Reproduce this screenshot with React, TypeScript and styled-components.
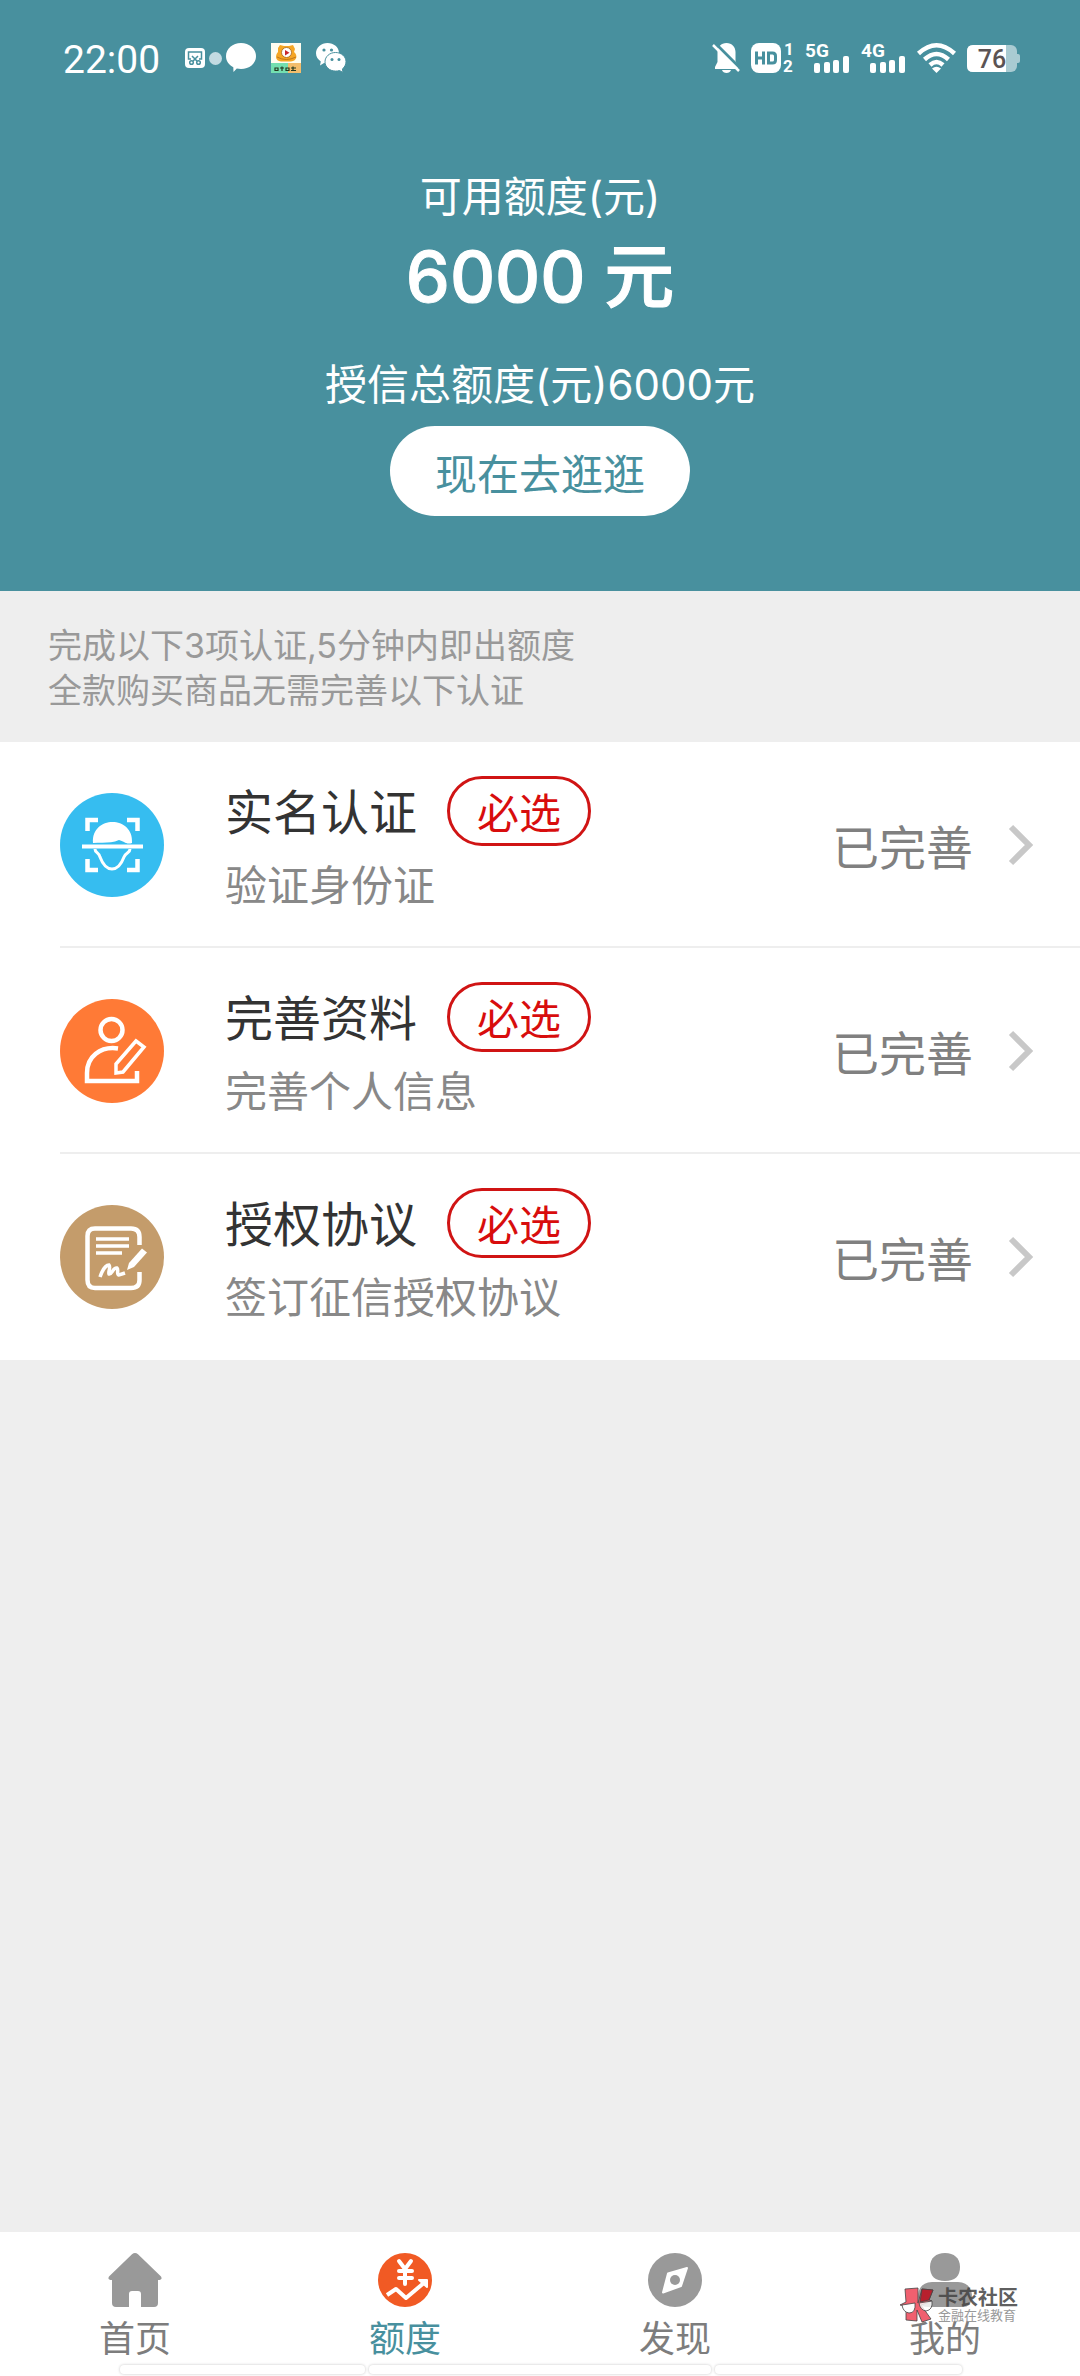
import React from 'react';
import styled, { createGlobalStyle } from 'styled-components';

const teal = '#48909e';
const textFont = 'Inter, "Noto Sans CJK SC", sans-serif';

const GlobalStyle = createGlobalStyle`
  *, *::before, *::after { box-sizing: border-box; }
  body { margin: 0; background: #eeeeee; font-family: ${textFont}; }
  a { color: inherit; text-decoration: none; }
  svg { display: block; flex: none; overflow: visible; }
`;

const Page = styled.div`
  min-height: 100vh;
  display: flex;
  flex-direction: column;
  background: #eeeeee;
`;

const Header = styled.header`
  background: ${teal};
  color: #ffffff;
  padding-bottom: 75px;
`;

const StatusBar = styled.div`
  display: flex;
  align-items: center;
  justify-content: space-between;
  height: 116px;
  padding: 0 60px 0 63px;
`;

const StatusGroup = styled.div<{ $gap: number }>`
  display: flex;
  align-items: center;
  gap: ${(p) => p.$gap}px;
`;

const Clock = styled.time`
  padding-top: 4px;
  margin-right: 10px;
  font: 400 39px/48px Roboto, sans-serif;
`;

const Credit = styled.section`
  display: flex;
  flex-direction: column;
  align-items: center;
  padding-top: 51px;
`;

const CreditLabel = styled.h1`
  margin: 0;
  font-size: 42px;
  line-height: 60px;
  font-weight: 400;
`;

const CreditAmount = styled.p`
  margin: 0 0 28px;
  font-size: 70px;
  line-height: 100px;
  font-weight: 500;
  -webkit-text-stroke: 1px #ffffff;
`;

const CreditTotal = styled.p`
  margin: 0;
  font-size: 42px;
  line-height: 60px;
`;

const ShopButton = styled.button`
  margin-top: 11px;
  width: 300px;
  height: 90px;
  padding: 7px 0 0;
  border: 0;
  border-radius: 45px;
  background: #ffffff;
  color: ${teal};
  font-family: inherit;
  font-size: 42px;
  line-height: 60px;
`;

const Notice = styled.p`
  margin: 0;
  padding: 32px 48px 29px;
  color: #999999;
  font-size: 34px;
  line-height: 45px;
`;

const NoticeLine = styled.span`
  display: block;
`;

const List = styled.ul`
  margin: 0;
  padding: 0 0 0 60px;
  list-style: none;
  background: #ffffff;
`;

const Item = styled.li`
  border-bottom: 2px solid #eeeeee;

  &:last-child { border-color: transparent; }
`;

const ItemLink = styled.a`
  display: flex;
  align-items: center;
  min-height: 204px;
  padding: 2px 47px 0 0;
`;

const ItemBody = styled.div`
  flex: 1;
  min-width: 0;
  margin-left: 61px;
`;

const ItemHead = styled.div`
  display: flex;
  align-items: center;
  gap: 30px;
`;

const ItemTitle = styled.h2`
  margin: 0;
  padding-top: 4px;
  color: #333333;
  font-size: 48px;
  line-height: 66px;
  font-weight: 400;
`;

const Required = styled.span`
  width: 144px;
  height: 70px;
  padding-top: 5px;
  border: 3px solid #d01414;
  border-radius: 35px;
  color: #d80d0d;
  font-size: 42px;
  line-height: 59px;
  text-align: center;
`;

const ItemNote = styled.p`
  margin: 12px 0 0;
  color: #888888;
  font-size: 42px;
  line-height: 56px;
`;

const ItemState = styled.span`
  margin-right: 36px;
  padding-top: 6px;
  color: #808080;
  font-size: 47px;
  line-height: 68px;
`;

const TabBar = styled.nav`
  position: sticky;
  bottom: 0;
  display: grid;
  grid-template-columns: repeat(4, 1fr);
  height: 144px;
  margin-top: auto;
  background: #ffffff;
`;

const Tab = styled.a<{ $active?: boolean }>`
  display: flex;
  flex-direction: column;
  align-items: center;
  gap: 6px;
  padding-top: 21px;
  color: ${(p) => (p.$active ? teal : '#7d7d7d')};
  font-size: 36px;
  line-height: 52px;
`;

const Strips = styled.div`
  position: absolute;
  left: 120px;
  right: 118px;
  bottom: 2px;
  display: grid;
  grid-template-columns: 246fr 342fr 248fr;
  gap: 4px;
`;

const Strip = styled.div`
  height: 9px;
  border-radius: 4px;
  background: #ffffff;
  box-shadow: 0 0 3px #c4c4c4;
`;

const Watermark = styled.div`
  position: absolute;
  right: 62px;
  top: 56px;
  display: flex;
  gap: 4px;
  align-items: center;
`;

const WatermarkName = styled.strong`
  display: block;
  color: #444444;
  opacity: 0.85;
  font-size: 20px;
  line-height: 20px;
`;

const WatermarkSlogan = styled.small`
  display: block;
  color: #999999;
  font-size: 13px;
  line-height: 14px;
`;

const ClipIcon = () => (
  <svg width="20" height="20" viewBox="0 0 20 20" fill="none" stroke={teal} strokeWidth="1.5">
    <rect width="20" height="20" rx="4" fill="#fff" stroke="none" />
    <path d="M6 11H3.500V4H16.500V11H14M7 8L12 13M13 8L8 13" />
    <circle cx="6.500" cy="14.500" r="1.800" />
    <circle cx="13.500" cy="14.500" r="1.800" />
  </svg>
);

const DotIcon = () => (
  <svg width="13" height="13" viewBox="0 0 13 13">
    <circle cx="6.500" cy="6.500" r="6.500" fill="#c3dbe2" />
  </svg>
);

const BubbleIcon = () => (
  <svg width="30" height="30" viewBox="0 0 30 30" fill="#fff">
    <path d="M15 0C23.300 0 30 5.800 30 13.200S23.300 26 15 26C13.600 26 12 25.800 10.800 25.500L7.500 29L7.300 24.200C3 22 0 17.900 0 13.200C0 5.800 6.700 0 15 0Z" />
  </svg>
);

const CartoonIcon = () => (
  <svg width="30" height="30" viewBox="0 0 30 30">
    <rect width="30" height="30" fill="#fffdf0" />
    <rect y="20" width="20" height="10" fill="#73dfb0" />
    <rect x="17" y="20" width="13" height="10" fill="#f3bd6c" />
    <path d="M7 5L9 2L13 3H18L22 2L24 6L23 9C27 12 26 18 20 18.500H10C4 18 4 12 7 9Z" fill="#f5a623" />
    <circle cx="15.500" cy="9.500" r="5" fill="#fff" stroke="#a5641c" strokeWidth="0.800" />
    <path d="M14 7V12.500L18.500 9.700Z" fill="#c8262e" />
    <path d="M6 14Q15 19 25 14" fill="none" stroke="#b06a1a" strokeWidth="0.800" />
    <path d="M4 25h3v2.500h-3zM9 25h4M11 23.500v4.500M15 25h3v2.500h-3zM20 25h5M22 23.500v4.500M20 27.500h5" fill="none" stroke="#25391f" strokeWidth="1.200" />
  </svg>
);

const WechatIcon = () => (
  <svg width="30" height="30" viewBox="0 0 30 30">
    <path d="M11.500 0C17.800 0 23 4.300 23 10S17.800 20.500 11.500 20.500L8 20L4 22.500L4.800 18.500C2 16.600 0 13.800 0 10.300C0 4.500 5.200 0 11.500 0Z" fill="#fff" />
    <path d="M19.500 9.500C25.500 9.500 30 13.600 30 18.700C30 21.700 28.500 24.200 26.400 25.900L27 29.500L23.500 27.500C22.300 27.900 21 28.100 19.500 28.100C13.700 28.100 9 24 9 18.800S13.700 9.500 19.500 9.500Z" fill="#fff" stroke={teal} strokeWidth="1" />
    <g fill={teal}>
      <circle cx="8" cy="7" r="1.600" />
      <circle cx="15.500" cy="7" r="1.600" />
      <circle cx="16" cy="16.500" r="1.500" />
      <circle cx="23" cy="16.500" r="1.500" />
    </g>
  </svg>
);

const MutedIcon = () => (
  <svg width="27" height="30" viewBox="0 0 27 30">
    <path d="M13.500 0C19 0 22.500 4 22.500 9V18L25 24V26H2V24L4.500 19V9C4.500 4 8 0 13.500 0Z" fill="#fff" />
    <path d="M9 27H18C17 31 10 31 9 27Z" fill="#fff" />
    <path d="M1 -1L28 26" stroke={teal} strokeWidth="3" />
    <path d="M0 2L26 28" stroke="#fff" strokeWidth="2.500" />
  </svg>
);

const HdIcon = () => (
  <svg width="43" height="30" viewBox="0 0 43 30">
    <rect width="30" height="30" rx="8" fill="#fff" />
    <path d="M5.500 8.500V21.500M12.500 8.500V21.500M5.500 15H12.500M17.500 10H21.500Q24.500 10 24.500 13V17Q24.500 20 21.500 20H17.500Z" fill="none" stroke={teal} strokeWidth="3" />
    <g fill="#fff" fontFamily="Roboto, sans-serif" fontWeight="700" fontSize="17">
      <text x="33" y="12">1</text>
      <text x="32" y="29">2</text>
    </g>
  </svg>
);

const SignalIcon = ({ label }: { label: string }) => (
  <svg width="45" height="30" viewBox="0 0 45 30" fill="#fff">
    <text x="0" y="14" fontFamily="Roboto, sans-serif" fontWeight="700" fontSize="19">{label}</text>
    <rect x="9" y="20" width="6" height="10" rx="2" />
    <rect x="19" y="19" width="6" height="11" rx="2" />
    <rect x="28" y="17" width="6" height="13" rx="2" />
    <rect x="38" y="13" width="6" height="17" rx="2" />
  </svg>
);

const WifiIcon = () => (
  <svg width="39" height="30" viewBox="0 0 39 30" fill="none" stroke="#fff" strokeWidth="4.500">
    <path d="M1.500 10.500Q19.500 -6 37.500 10.500M7.500 16.500Q19.500 5.500 31.500 16.500M13 22Q19.500 16 26 22" />
    <path d="M15 25.500Q19.500 22 24 25.500L19.500 30Z" fill="#fff" stroke="none" />
  </svg>
);

const BatteryIcon = () => (
  <svg width="53" height="27" viewBox="0 0 53 27">
    <rect width="50" height="27" rx="6" fill="#a9cbd2" />
    <path d="M50 9H51Q53 9 53 11V16Q53 18 51 18H50Z" fill="#a9cbd2" />
    <path d="M6 0H39V27H6Q0 27 0 21V6Q0 0 6 0Z" fill="#fff" />
    <text x="25" y="23" textAnchor="middle" fill="#5b5354" fontFamily="Roboto, sans-serif" fontWeight="500" fontSize="25">76</text>
  </svg>
);

const FaceIcon = () => (
  <svg width="104" height="104" viewBox="0 0 104 104" fill="none" stroke="#fff">
    <circle cx="52" cy="52" r="52" fill="#36bdf0" stroke="none" />
    <path d="M27.500 38V27H38M67 27H77.500V38M77.500 66V77H67M38 77H27.500V66" strokeWidth="4.500" />
    <path d="M33 50C31 22 74 22 72 50C66 52 64 48 59 47C51 51 43 49 33 50Z" fill="#fff" stroke="none" />
    <path d="M22 53.500H83" strokeWidth="4" />
    <path d="M35 56C35 60 39 59 40 64C43 72 47 76 52 76S61 72 64 64C66 59 70 60 70 56" strokeWidth="3" />
  </svg>
);

const ProfileIcon = () => (
  <svg width="104" height="104" viewBox="0 0 104 104" fill="none" stroke="#fff" strokeWidth="4.500">
    <circle cx="52" cy="52" r="52" fill="#ff7a36" stroke="none" />
    <circle cx="51.500" cy="31" r="11" />
    <path d="M58 49.500C40 47 27 58 27 74V82H77V72" />
    <path d="M76 42L84 48L63 73L56 74V65Z" strokeWidth="3.500" />
  </svg>
);

const AgreementIcon = () => (
  <svg width="104" height="104" viewBox="0 0 104 104" fill="none" stroke="#fff" strokeWidth="4.500">
    <circle cx="52" cy="52" r="52" fill="#c49c6b" stroke="none" />
    <path d="M79.500 40V32Q79.500 23.500 71 23.500H35Q27.500 23.500 27.500 31V75Q27.500 83 35 83H71Q79.500 83 79.500 75V67" />
    <path d="M36 34H69M36 41H69M36 48H62" strokeWidth="3.500" />
    <path d="M40 72C43 63 47 60 49 60C51 62 48 67 49 69C52 70 53 62 57 63C59 65 56 69 59 70L65 68" strokeWidth="3.500" />
    <path d="M82 43.500L87 47.500L74 62L67 65L69 58Z" fill="#fff" stroke="none" />
  </svg>
);

const ChevronIcon = () => (
  <svg width="24" height="42" viewBox="0 0 24 42" fill="none" stroke="#c8c8c8" strokeWidth="6">
    <path d="M2 3L20 21L2 39" />
  </svg>
);

const HomeIcon = () => (
  <svg width="54" height="54" viewBox="0 0 54 54" fill="#999999">
    <path d="M24 1.200Q27 -1.200 30 1.200L53 23.500Q55 27 50 27V50Q50 54 46 54H33V41Q33 38 30 38H24Q21 38 21 41V54H8Q4 54 4 50V27Q-1 27 1 23.500Z" />
  </svg>
);

const CreditIcon = () => (
  <svg width="54" height="54" viewBox="0 0 54 54" fill="none" stroke="#fff" strokeWidth="4" strokeLinecap="round" strokeLinejoin="round">
    <circle cx="27" cy="27" r="27" fill="#f15a24" stroke="none" />
    <path d="M21 8L27 16L33 8M27 16V31M21 18H34M21 25H34" />
    <path d="M9 42L18 36L28 45L47 29" strokeLinecap="butt" />
    <path d="M41 27H49V34Z" fill="#fff" strokeWidth="2" />
  </svg>
);

const CompassIcon = () => (
  <svg width="54" height="54" viewBox="0 0 54 54">
    <circle cx="27" cy="27" r="27" fill="#999999" />
    <path d="M39 15L33 33L15 39.500L20 20.500Z" fill="#fff" stroke="#fff" strokeWidth="2" strokeLinejoin="round" />
    <circle cx="27" cy="27" r="5" fill="#999999" />
  </svg>
);

const PersonIcon = () => (
  <svg width="54" height="54" viewBox="0 0 54 54" fill="#999999">
    <path d="M27 0C36 0 42 5 42 14S37 28 27 28S12 23 12 14S18 0 27 0Z" />
    <path d="M14 29H40Q54 30 54 44Q54 54 44 54H10Q0 54 0 44Q0 30 14 29Z" />
  </svg>
);

const WatermarkLogo = () => (
  <svg width="34" height="34" viewBox="0 0 34 34" stroke="#444" strokeWidth="0.800">
    <path d="M5 1L18 0V15L22 1L33 2L29 12L32 13L21 17L31 31L22 34L17 22V33L6 32V18L0 17L6 14Z" fill="#f0606f" />
    <path d="M22 1L33 2L29 12L20 14Z" fill="#b8202e" />
    <path d="M2 17L15 15Q16 25 9 25Q3 24 2 17Z" fill="#fff" />
    <path d="M19 15L32 13Q33 22 26 23Q20 22 19 15Z" fill="#fff" fillOpacity="0.800" />
  </svg>
);

const items = [
  { id: 'identity', title: '实名认证', note: '验证身份证', Icon: FaceIcon },
  { id: 'profile', title: '完善资料', note: '完善个人信息', Icon: ProfileIcon },
  { id: 'agreement', title: '授权协议', note: '签订征信授权协议', Icon: AgreementIcon },
];

const tabs = [
  { id: 'home', label: '首页', Icon: HomeIcon },
  { id: 'credit', label: '额度', Icon: CreditIcon, active: true },
  { id: 'discover', label: '发现', Icon: CompassIcon },
  { id: 'mine', label: '我的', Icon: PersonIcon },
];

export default function App() {
  return (
    <Page>
      <GlobalStyle />
      <Header>
        <StatusBar>
          <StatusGroup $gap={15}>
            <Clock>22:00</Clock>
            <StatusGroup $gap={4}>
              <ClipIcon />
              <DotIcon />
              <BubbleIcon />
            </StatusGroup>
            <CartoonIcon />
            <WechatIcon />
          </StatusGroup>
          <StatusGroup $gap={11}>
            <MutedIcon />
            <HdIcon />
            <SignalIcon label="5G" />
            <SignalIcon label="4G" />
            <WifiIcon />
            <BatteryIcon />
          </StatusGroup>
        </StatusBar>
        <Credit>
          <CreditLabel>可用额度(元)</CreditLabel>
          <CreditAmount>6000 元</CreditAmount>
          <CreditTotal>授信总额度(元)6000元</CreditTotal>
          <ShopButton type="button">现在去逛逛</ShopButton>
        </Credit>
      </Header>
      <main>
        <Notice>
          <NoticeLine>完成以下3项认证,5分钟内即出额度</NoticeLine>
          <NoticeLine>全款购买商品无需完善以下认证</NoticeLine>
        </Notice>
        <List>
          {items.map(({ id, title, note, Icon }) => (
            <Item key={id}>
              <ItemLink href={`#${id}`}>
                <Icon />
                <ItemBody>
                  <ItemHead>
                    <ItemTitle>{title}</ItemTitle>
                    <Required>必选</Required>
                  </ItemHead>
                  <ItemNote>{note}</ItemNote>
                </ItemBody>
                <ItemState>已完善</ItemState>
                <ChevronIcon />
              </ItemLink>
            </Item>
          ))}
        </List>
      </main>
      <TabBar>
        {tabs.map(({ id, label, Icon, active }) => (
          <Tab key={id} href={`#${id}`} $active={active} aria-current={active ? 'page' : undefined}>
            <Icon />
            {label}
          </Tab>
        ))}
        <Strips>
          <Strip />
          <Strip />
          <Strip />
        </Strips>
        <Watermark>
          <WatermarkLogo />
          <div>
            <WatermarkName>卡农社区</WatermarkName>
            <WatermarkSlogan>金融在线教育</WatermarkSlogan>
          </div>
        </Watermark>
      </TabBar>
    </Page>
  );
}
